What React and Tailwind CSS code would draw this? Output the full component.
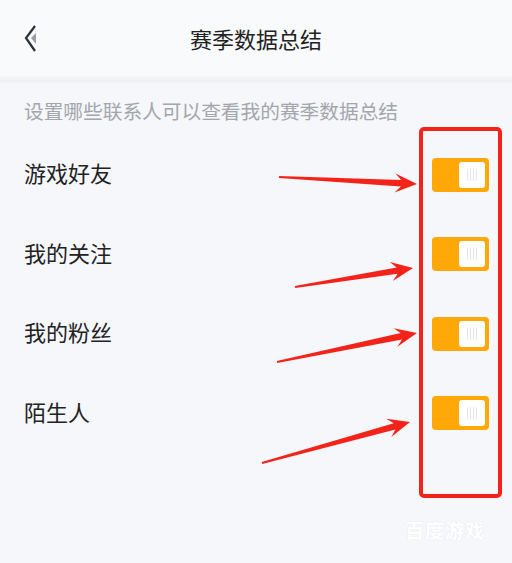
import React from 'react';

const rows = ['游戏好友', '我的关注', '我的粉丝', '陌生人'];

// annotation arrows: [tailX, tailY, tipX, tipY]
const arrows = [
  [279, 177, 417, 184],
  [295, 287, 413, 268],
  [277, 362, 417, 333],
  [262, 463, 410, 422],
];

const arrowPoints = ([tx, ty, px, py]) => {
  const len = Math.hypot(px - tx, py - ty);
  const dx = (px - tx) / len;
  const dy = (py - ty) / len;
  const nx = -dy;
  const ny = dx;
  const at = (back, side) => [px - dx * back + nx * side, py - dy * back + ny * side];
  const pts = [
    [tx + nx * 1, ty + ny * 1],
    at(16, 3.2),
    at(22, 9.5),
    [px, py],
    at(22, -9.5),
    at(16, -3.2),
    [tx - nx * 1, ty - ny * 1],
  ];
  return pts.map((p) => p.map((v) => v.toFixed(1)).join(',')).join(' ');
};

const Toggle = () => (
  <div className="w-[57px] h-[34px] rounded-[4px] bg-[#ffa808] flex items-center justify-end pr-[4px]">
    <div className="w-[26px] h-[26px] rounded-[3px] bg-white flex items-center justify-center gap-[2px]">
      <span className="w-px h-[12px] bg-[#e6e6e6]" />
      <span className="w-px h-[12px] bg-[#e6e6e6]" />
      <span className="w-px h-[12px] bg-[#e6e6e6]" />
      <span className="w-px h-[12px] bg-[#e6e6e6]" />
    </div>
  </div>
);

const App = () => {
  return (
    <div
      className="relative w-[512px] h-[563px] overflow-hidden bg-[#f5f7fa]"
      style={{ fontFamily: '"Noto Sans CJK SC", "Noto Sans", sans-serif' }}
    >
      {/* header */}
      <div className="h-[76px] bg-[#f8fafc] grid grid-cols-[1fr_auto_1fr] items-center px-[24px]">
        <svg width="20" height="28" viewBox="0 0 20 28" className="mt-[2px]">
          <polygon points="7,13 12,8 12,19" fill="#9a9ea6" />
          <polyline points="11,1 2,13 11,26" fill="none" stroke="#2b2f36" strokeWidth="2.2" strokeLinejoin="miter" />
        </svg>
        <h1 className="text-[22px] leading-[28px] text-[#222] font-normal">赛季数据总结</h1>
        <div />
      </div>
      <div className="h-[6px] bg-gradient-to-b from-[#f3f5f8] to-[#eef0f3]" />

      {/* subtitle */}
      <div className="h-[53px] pt-[15px] pl-[24px]">
        <p className="text-[19.7px] leading-[28px] text-[#a3a6ab] whitespace-nowrap">
          设置哪些联系人可以查看我的赛季数据总结
        </p>
      </div>

      {/* rows */}
      <div className="flex flex-col">
        {rows.map((label) => (
          <div key={label} className="h-[79.5px] flex items-center justify-between pl-[24px] pr-[23px]">
            <span className="text-[22px] leading-[30px] text-[#222] mb-[5px]">{label}</span>
            <Toggle />
          </div>
        ))}
      </div>

      {/* annotation overlay */}
      <div className="absolute left-[419px] top-[127px] w-[83px] h-[371px] border-[4px] border-[#f4231a] rounded-[5px]" />
      <svg className="absolute left-0 top-0" width="512" height="563">
        {arrows.map((a, i) => (
          <polygon key={i} points={arrowPoints(a)} fill="#f4231a" />
        ))}
      </svg>

      {/* watermark */}
      <div className="absolute left-[405px] top-[516px] text-[19px] font-bold text-white tracking-[1px] [text-shadow:0_0_1px_rgba(200,205,215,0.5)]">
        百度游戏
      </div>
    </div>
  );
};

export default App;
